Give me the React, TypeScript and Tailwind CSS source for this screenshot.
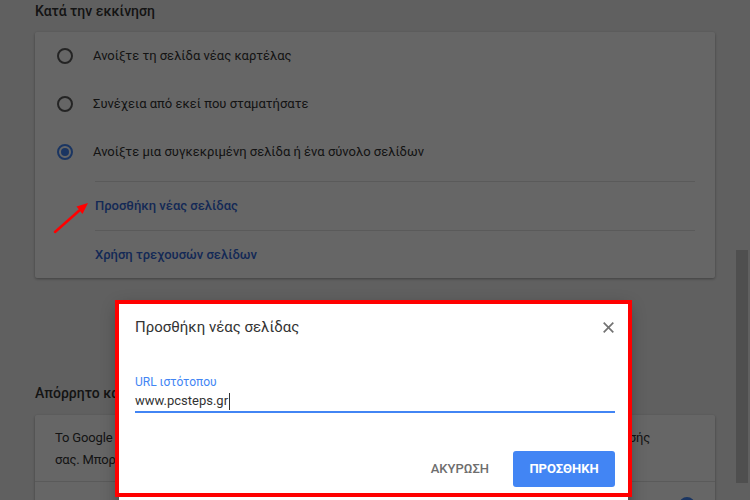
import { useState } from "react";

const startupOptions = [
  "Ανοίξτε τη σελίδα νέας καρτέλας",
  "Συνέχεια από εκεί που σταματήσατε",
  "Ανοίξτε μια συγκεκριμένη σελίδα ή ένα σύνολο σελίδων",
];

const Radio = ({ checked }: { checked: boolean }) => (
  <span
    className={
      checked
        ? "flex h-4 w-4 items-center justify-center rounded-full border-2 border-[#4285f4]"
        : "flex h-4 w-4 items-center justify-center rounded-full border-2 border-[#5a5a5a]"
    }
  >
    {checked && <span className="h-2 w-2 rounded-full bg-[#4285f4]" />}
  </span>
);

const App = () => {
  const [selected] = useState(2);

  return (
    <div className="relative h-[500px] w-[750px] overflow-hidden bg-[#f1f1f1] font-['Roboto',sans-serif] text-[13px] text-[#333333]">
      <div className="ml-[35px] w-[680px]">
        <h2 className="mb-[10px] h-[22px] text-[14px] font-medium leading-[22px] text-[#333333]">
          Κατά την εκκίνηση
        </h2>

        <div className="rounded-[2px] bg-white shadow-[0_1px_3px_rgba(0,0,0,0.35)]">
          {startupOptions.map((label, i) => (
            <div key={label} className="flex h-[48px] items-center gap-[20px] pl-[22px]">
              <Radio checked={i === selected} />
              <span>{label}</span>
            </div>
          ))}
          <div className="ml-[60px] mr-[20px] mt-[5px]">
            <div className="flex h-[49px] items-center border-t border-[#e0e0e0] font-medium text-[#3367d6]">
              Προσθήκη νέας σελίδας
            </div>
            <div className="flex h-[48px] items-center border-t border-[#e0e0e0] font-medium text-[#3367d6]">
              Χρήση τρεχουσών σελίδων
            </div>
          </div>
        </div>

        <h2 className="mb-[11px] mt-[104px] h-[22px] text-[14px] font-medium leading-[22px] text-[#333333]">
          Απόρρητο και ασφάλεια
        </h2>

        <div className="rounded-[2px] bg-white shadow-[0_1px_3px_rgba(0,0,0,0.35)]">
          <p className="whitespace-nowrap px-[20px] pb-[10px] pt-[12px] leading-[22px] tracking-[-0.16px]">
            Το Google Chrome μπορεί να χρησιμοποιεί υπηρεσίες ιστού για τη βελτίωση της εμπειρίας περιήγησής
            <br />
            σας. Μπορείτε προαιρετικά να απενεργοποιήσετε αυτές τις υπηρεσίες.
          </p>
          <div className="flex h-[48px] justify-end border-t border-[#e0e0e0] pr-[20px] pt-[15px]">
            <span className="h-4 w-4 rounded-full bg-[#4285f4]" />
          </div>
        </div>
      </div>

      {/* scrollbar thumb */}
      <div className="absolute left-[736px] top-[250px] h-[233px] w-[12px] bg-[#c5c5c5]" />

      {/* modal backdrop */}
      <div className="absolute inset-0 bg-black/60" />

      {/* annotation arrow */}
      <svg className="pointer-events-none absolute left-0 top-0" width="750" height="500">
        <line x1="55" y1="232" x2="81" y2="209" stroke="#ff0000" strokeWidth="2.5" strokeLinecap="round" />
        <polygon points="88,203 76.5,206.5 82.5,214" fill="#ff0000" />
      </svg>

      {/* dialog */}
      <div className="absolute left-[119px] top-[304px] flex h-[210px] w-[509px] flex-col bg-white shadow-[0_4px_16px_rgba(0,0,0,0.4)]">
        <div className="flex h-[46px] items-center justify-between pl-[16px] pr-[14px]">
          <span className="text-[15px] text-[#333333]">Προσθήκη νέας σελίδας</span>
          <svg width="11" height="11" viewBox="0 0 11 11">
            <path d="M0.7 0.7 L10.3 10.3 M10.3 0.7 L0.7 10.3" stroke="#737373" strokeWidth="1.7" />
          </svg>
        </div>

        <div className="pl-[16px] pr-[13px]">
          <div className="mt-[24px] text-[12px] leading-[16px] text-[#4285f4]">URL ιστότοπου</div>
          <div className="flex h-[23px] items-center border-b-2 border-[#4285f4] pt-[1px] text-[13px] leading-[20px] text-[#333333]">
            www.pcsteps.gr
            <span className="ml-[1px] h-[17px] w-px bg-[#333333]" />
          </div>

          <div className="mt-[38px] flex items-center justify-end gap-[8px]">
            <button className="h-[36px] px-[16px] text-[13px] font-medium text-[#6e6e6e]">ΑΚΥΡΩΣΗ</button>
            <button className="h-[36px] w-[102px] rounded-[3px] bg-[#4285f4] text-[13px] font-bold text-white">
              ΠΡΟΣΘΗΚΗ
            </button>
          </div>
        </div>
      </div>

      {/* highlight frame */}
      <div className="pointer-events-none absolute left-[115px] top-[300px] h-[197px] w-[517px] border-4 border-[#ff0000]" />
    </div>
  );
};

export default App;
